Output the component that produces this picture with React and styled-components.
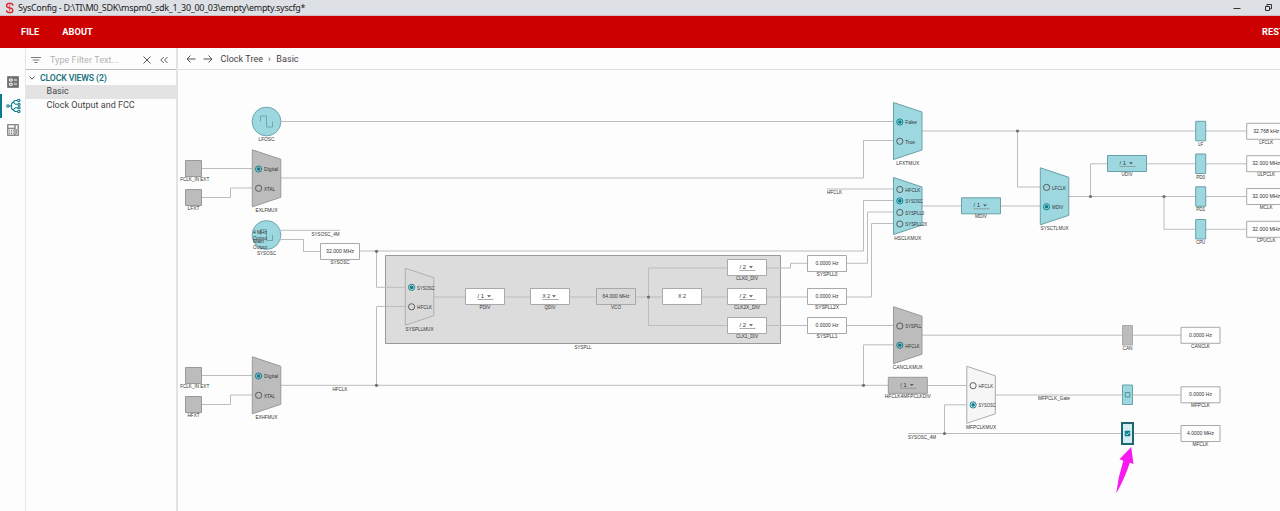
import React from 'react';
import styled, { createGlobalStyle } from 'styled-components';

const GlobalStyle = createGlobalStyle`
  * { box-sizing: border-box; }
  body { margin: 0; background: #fdfdfd; font-family: Roboto, "Liberation Sans", sans-serif; overflow: hidden; }
`;

const C = {
  teal: '#9dd7df', tealLine: '#6aa0a8', accent: '#0b7c8c', dark: '#1f6673',
  grey: '#bcbcbc', greyLine: '#999', light: '#f6f6f6', white: '#fefefe',
  wire: '#bdbdbd', text: '#333',
};

const Window = styled.div`
  width: 1280px;
  height: 511px;
  display: flex;
  flex-direction: column;
  overflow: hidden;
`;
const TitleBar = styled.header`
  height: 16px;
  flex: none;
  display: flex;
  align-items: center;
  padding-left: 5px;
  background: #dde1e5;
  border-bottom: 1px solid #d2bcc0;
`;
const Title = styled.span`
  flex: 1;
  margin-left: 4px;
  font: 9px/15px "Noto Sans", sans-serif;
  letter-spacing: -0.3px;
  color: #222;
  white-space: pre;
`;
const WindowButtons = styled.div`
  display: flex;
  align-items: center;
  gap: 23px;
  padding-right: 7px;
`;
const MenuBar = styled.nav`
  height: 32px;
  flex: none;
  display: flex;
  align-items: center;
  gap: 23px;
  padding: 0 0 1px 21px;
  background: #c00;
  overflow: hidden;
`;
const MenuItem = styled.span`
  flex: none;
  margin-left: ${p => (p.$end ? 'auto' : 0)};
  margin-right: ${p => (p.$end ? '-22px' : 0)};
  color: #fff;
  font-size: 9.2px;
  font-weight: 700;
  letter-spacing: 0.1px;
`;
const Body = styled.div`
  flex: 1;
  display: flex;
  min-height: 0;
`;
const Rail = styled.aside`
  width: 26px;
  flex: none;
  padding-top: 22px;
  border-right: 1px solid #e6e6e6;
`;
const RailItem = styled.div`
  height: 24px;
  display: flex;
  align-items: center;
  padding-left: 4px;
  border-left: 2px solid ${p => (p.$active ? C.accent : 'transparent')};
`;
const Sidebar = styled.section`
  width: 152px;
  flex: none;
  border-right: 2px solid #e3e3e3;
  color: #444;
  font-size: 9px;
`;
const FilterRow = styled.div`
  height: 22px;
  display: flex;
  align-items: center;
  padding: 2px 8px 0 5px;
  border-bottom: 1px solid #bdbdbd;
`;
const Placeholder = styled.span`
  flex: 1;
  margin-left: 9px;
  color: #b3b3b3;
  font-size: 9px;
  letter-spacing: 0.05px;
`;
const GroupRow = styled.div`
  height: 15px;
  display: flex;
  align-items: center;
  gap: 5px;
  padding-left: 3px;
  color: #1b7481;
  font-weight: 600;
  font-size: 8.7px;
  letter-spacing: -0.13px;
`;
const TreeItem = styled.div`
  height: 14px;
  padding-left: 20.5px;
  line-height: 13.5px;
  letter-spacing: 0.02px;
  background: ${p => (p.$selected ? '#e3e3e3' : 'transparent')};
`;
const Main = styled.main`
  flex: 1;
  min-width: 0;
  display: flex;
  flex-direction: column;
`;
const Breadcrumb = styled.div`
  height: 22px;
  flex: none;
  display: flex;
  align-items: center;
  padding-left: 8px;
  color: #444;
  font-size: 9px;
  letter-spacing: 0.05px;
  border-bottom: 1px solid #dedede;
`;
const Crumb = styled.span`
  margin-left: ${p => p.$gap}px;
`;
const Canvas = styled.svg`
  display: block;
  flex: none;
`;
const Wire = styled.path`
  fill: none;
  stroke: ${C.wire};
  stroke-width: 1;
`;
const Caption = styled.text`
  font-family: "Liberation Sans", sans-serif;
  font-size: 5.2px;
  fill: ${C.text};
`;
const Shape = styled.path`
  fill: ${p => p.$fill};
  stroke: ${p => p.$stroke};
  stroke-width: ${p => p.$w || 1};
`;
const Stroke = styled.svg`
  flex: none;
  margin-left: ${p => p.$gap || 0}px;
  fill: none;
  stroke: ${p => p.$color || '#666'};
  stroke-width: ${p => p.$w || 1};
`;

const Label = ({ x, y, w, anchor = 'middle', children }) => (
  <Caption x={x} y={y - 0.7} textAnchor={anchor} textLength={w} lengthAdjust="spacingAndGlyphs">{children}</Caption>
);

const Block = ({ x, y, w, h, fill = C.white, stroke = '#a9a9a9', sw }) => (
  <Shape d={`M${x} ${y}h${w}v${h}h${-w}z`} $fill={fill} $stroke={stroke} $w={sw} />
);

const Value = ({ x, y, value, name, vw = 23, nw, fill }) => (
  <g>
    <Block x={x} y={y} w={39} h={16} fill={fill} />
    <Label x={x + 19.5} y={y + 10.2} w={vw}>{value}</Label>
    {name && <Label x={x + 19.5} y={y + 21.3} w={nw}>{name}</Label>}
  </g>
);

const Divider = ({ x, y, value = '/ 1', name, nw, fill = C.white, stroke = '#a9a9a9' }) => (
  <g>
    <Block x={x} y={y} w={39} h={16} fill={fill} stroke={stroke} />
    <Label x={x + 12} y={y + 10.3} w={value[0] === 'X' ? 7.5 : 6.5} anchor="start">{value}</Label>
    <path d={`M${x + 21.5} ${y + 6.7}h4l-2 2z`} fill="#555" />
    <path d={`M${x + 12} ${y + 11}h16`} stroke="#888" strokeWidth="0.7" />
    <Label x={x + 19.5} y={y + 21.3} w={nw}>{name}</Label>
  </g>
);

const Radio = ({ x, y, on }) => (
  <g>
    <circle cx={x} cy={y} r="3.1" fill="none" stroke={on ? C.accent : '#555'} strokeWidth="0.95" />
    {on && <circle cx={x} cy={y} r="1.8" fill={C.accent} />}
  </g>
);

const Mux = ({ x, y, name, nw, options, fill = C.grey, stroke = C.greyLine }) => (
  <g>
    <Shape d={`M${x} ${y}l28.5 9.5v38l-28.5 9.5z`} $fill={fill} $stroke={stroke} />
    {options.map(([text, dy, w, on]) => (
      <g key={text}>
        <Radio x={x + 6.3} y={y + dy} on={on} />
        <Label x={x + 11.8} y={y + dy + 3} w={w} anchor="start">{text}</Label>
      </g>
    ))}
    <Label x={x + 14.3} y={y + 63.2} w={nw}>{name}</Label>
  </g>
);

const Gate = ({ x, y, name, fill = C.teal, stroke = C.tealLine, nw }) => (
  <g>
    <Block x={x} y={y} w={10} h={19.5} fill={fill} stroke={stroke} />
    {name && <Label x={x + 5} y={y + 25.3} w={nw}>{name}</Label>}
  </g>
);

const Oscillator = ({ x, y, name }) => (
  <g>
    <circle cx={x} cy={y} r="14.4" fill={C.teal} stroke={C.tealLine} strokeWidth="0.9" />
    <path d={`M${x - 6} ${y}v-5.5h6v11h6v-5.5`} fill="none" stroke="#6f9fa7" strokeWidth="0.9" />
    <Label x={x} y={y + 20.3} w={name.length > 5 ? 19 : 16}>{name}</Label>
  </g>
);

const Pin = ({ y, name, nw, dx = 0 }) => (
  <g>
    <Block x={185.5} y={y} w={16} h={16} fill={C.grey} stroke={C.greyLine} />
    <Label x={193.5 + dx} y={y + 21.3} w={nw}>{name}</Label>
  </g>
);

const WIRES = [
  'M281 121.5H893', 'M202 168.5H252', 'M202 197.5H230.5V188H252', 'M281 178H863.5V140.5H893',
  'M281 230.3H340', 'M281 239.5H303.5V251.5H320', 'M359 251H863.5V200.5H893',
  'M376.5 251V287.3H405', 'M376.5 385V306.5H405', 'M202 375.5H252', 'M202 404.5H230.5V395H252',
  'M281 385.3H888', 'M827 189H893',
  'M847 263.3H867.5V212H893', 'M847 297H871.5V223.5H893', 'M847 325.5H893',
  'M922 131H1247', 'M1017.5 131V187H1040', 'M922 206H1040',
  'M1069 196.5H1247', 'M1090.5 196.5V163.8H1247', 'M1164 196.5V229.3H1247',
  'M922 335.2H1181', 'M863.5 385V344.8H893', 'M927 385.5H966',
  'M995 395H1181', 'M908 433.5H1181', 'M944.5 433.5V404.8H966',
];
const PLL_WIRES = [
  'M434 297H728', 'M648.5 297V268H728', 'M648.5 297V325.5H728',
  'M767 268H790.5V263.3H808', 'M767 297H808', 'M767 325.5H808',
];
const JUNCTIONS = [[376.5, 251.3], [376.5, 385.3], [863.5, 385.3], [1017.5, 131], [1090.5, 196.5], [1164, 196.5], [944.5, 433.5]];

const ClockTree = () => (
  <Canvas width="1102" height="441" viewBox="178 70 1102 441">
    {WIRES.map(d => <Wire key={d} d={d} />)}

    <Oscillator x={266.5} y={121.5} name="LFOSC" />
    <Pin y={160.5} name="FCLK_IN EXT" nw={29} dx={1.2} />
    <Pin y={189.5} name="LFXT" nw={12} />
    <Mux x={252.3} y={149.8} name="EXLFMUX" nw={22} options={[['Digital', 19.2, 14, true], ['XTAL', 38.5, 11]]} />
    <Oscillator x={266.5} y={235} name="SYSOSC" />
    <Label x={253} y={234.3} w={14} anchor="start">4 MHz</Label>
    <Label x={253} y={240.2} w={14} anchor="start">Output</Label>
    <Label x={253} y={243.7} w={11} anchor="start">Main</Label>
    <Label x={253} y={249.7} w={14} anchor="start">Output</Label>
    <Label x={325.5} y={236.2} w={28}>SYSOSC_4M</Label>
    <Value x={320.5} y={243.5} value="32.000 MHz" vw={28} name="SYSOSC" nw={19} />

    <Pin y={367.5} name="FCLK_IN EXT" nw={29} dx={1.2} />
    <Pin y={396.5} name="HFXT" nw={12} />
    <Mux x={252.3} y={356.8} name="EXHFMUX" nw={22} options={[['Digital', 19.2, 14, true], ['XTAL', 38.5, 11]]} />
    <Label x={340} y={391.6} w={15}>HFCLK</Label>

    <Block x={385.5} y={255.5} w={395} h={88} fill="#dcdcdc" stroke="#999" />
    <Wire d="M385 287.3H405M385 306.5H405" />
    {PLL_WIRES.map(d => <Wire key={d} d={d} />)}
    <Mux x={405.3} y={268.2} fill="#d9d9d9" stroke="#b0b0b0" name="SYSPLLMUX" nw={28} options={[['SYSOSC', 19.2, 17.5, true], ['HFCLK', 38.6, 15]]} />
    <Divider x={465.5} y={288.5} name="PDIV" nw={11} />
    <Divider x={530.5} y={288.5} name="QDIV" nw={11} value="X 2" />
    <Value x={596.5} y={288.5} value="64.000 MHz" vw={27} name="VCO" nw={10} fill="#d9d9d9" />
    <Value x={662.5} y={288.5} value="X 2" vw={8} />
    <Divider x={727.5} y={259.5} name="CLK0_DIV" nw={22} value="/ 2" />
    <Divider x={727.5} y={288.5} name="CLK2X_DIV" nw={26} value="/ 2" />
    <Divider x={727.5} y={317.5} name="CLK1_DIV" nw={22} value="/ 2" />
    <Label x={583} y={349.5} w={17}>SYSPLL</Label>

    <Value x={807.5} y={255.5} value="0.0000 Hz" name="SYSPLL0" nw={21} />
    <Value x={807.5} y={288.5} value="0.0000 Hz" name="SYSPLL2X" nw={24} />
    <Value x={807.5} y={317.5} value="0.0000 Hz" name="SYSPLL1" nw={21} />

    <Mux x={893.5} y={102.5} fill={C.teal} stroke={C.tealLine} name="LFXTMUX" nw={23} options={[['False', 19.5, 11.5, true], ['True', 38.8, 9.5]]} />
    <Label x={834.5} y={194.4} w={15}>HFCLK</Label>
    <Mux x={893.5} y={177.5} fill={C.teal} stroke={C.tealLine} name="HSCLKMUX" nw={27}
      options={[['HFCLK', 12, 15], ['SYSOSC', 23.4, 17.5, true], ['SYSPLL0', 35, 19], ['SYSPLL2X', 46.5, 22]]} />
    <Divider x={961.5} y={197.8} fill={C.teal} stroke={C.tealLine} name="MDIV" nw={12} />
    <Mux x={1040.3} y={167.8} fill={C.teal} stroke={C.tealLine} name="SYSCTLMUX" nw={28} options={[['LFCLK', 19.6, 14], ['MDIV', 39, 11, true]]} />
    <Divider x={1107.5} y={155.5} fill={C.teal} stroke={C.tealLine} name="UDIV" nw={11} />
    <Gate x={1195.7} y={121.3} name="LF" nw={5} />
    <Gate x={1195.7} y={154} name="PD0" nw={9} />
    <Gate x={1195.7} y={186.8} name="PD1" nw={9} />
    <Gate x={1195.7} y={219.5} name="CPU" nw={9} />
    <Value x={1246.7} y={123.3} value="32.768 kHz" vw={26} name="LFCLK" nw={14} />
    <Value x={1246.7} y={155.7} value="32.000 MHz" vw={28} name="ULPCLK" nw={18} />
    <Value x={1246.7} y={188.5} value="32.000 MHz" vw={28} name="MCLK" nw={13} />
    <Value x={1246.7} y={221.3} value="32.000 MHz" vw={28} name="CPUCLK" nw={19} />

    <Mux x={893.5} y={306.7} name="CANCLKMUX" nw={30} options={[['SYSPLL', 19.3, 16.5], ['HFCLK', 38.6, 14.5, true]]} />
    <Divider x={888.3} y={377.3} fill={C.grey} stroke={C.greyLine} name="HFCLK4MFPCLKDIV" nw={46} />
    <Mux x={966.8} y={366.3} fill={C.light} stroke="#aaa" name="MFPCLKMUX" nw={30} options={[['HFCLK', 19.4, 14.5], ['SYSOSC', 38.6, 17, true]]} />
    <Label x={922} y={439.3} w={28}>SYSOSC_4M</Label>
    <Label x={1054} y={400.9} w={32}>MFPCLK_Gate</Label>
    <Gate x={1122.5} y={325.5} name="CAN" nw={10} fill={C.grey} stroke="#aaa" />
    <Gate x={1122.5} y={385} />
    <Shape d="M1125.3 392.5h4.5v4.5h-4.5z" $fill="none" $stroke="#4b8993" $w={0.9} />
    <Block x={1122} y={423} w={11} h={21} fill="#d3eef2" stroke={C.dark} sw={2} />
    <Shape d="M1125 431h5v5h-5z" $fill={C.accent} $stroke={C.accent} $w={0.5} />
    <path d="M1125.8 433.5l1.3 1.3 2.4-2.5" fill="none" stroke="#fff" strokeWidth="0.8" />
    <Value x={1181} y={327.3} value="0.0000 Hz" name="CANCLK" nw={19} />
    <Value x={1181} y={386.8} value="0.0000 Hz" name="MFPCLK" nw={19} />
    <Value x={1181} y={425.5} value="4.0000 MHz" vw={27} name="MFCLK" nw={16} />
    {JUNCTIONS.concat([[648.5, 297]]).map(([x, y]) => (
      <circle key={`${x}-${y}`} cx={x} cy={y} r="1.6" fill="#707070" />
    ))}
    <path d="M1131.2 447L1133.500 464 1129.800 462.800Q1125 478 1116.200 493.500 1118 477 1123.300 460.700L1119.500 459.300z" fill="#f81af0" />
  </Canvas>
);

export default function App() {
  return (
    <Window>
      <GlobalStyle />
      <TitleBar>
        <Stroke width="9" height="12" viewBox="0 0 9 12" $color="#d9272e" $w={1.4}>
          <path d="M7.700 3.700V2.500L6.500 1.500h-3.500L1.700 2.600v2L3 5.500l3.500 1 1.200 1v2L6.500 10.500h-3.500L1.700 9.500V8.300" />
          <path d="M4.700 3.200v1.600M4.700 7.200v1.700" strokeWidth="0.900" />
        </Stroke>
        <Title>{'SysConfig - D:\\TI\\M0_SDK\\mspm0_sdk_1_30_00_03\\empty\\empty.syscfg*'}</Title>
        <WindowButtons>
          <Stroke width="8" height="8" $color="#333"><path d="M.5 4.500h7" /></Stroke>
          <Stroke width="9" height="9" $color="#333">
            <path d="M1.500 3.500h4v4h-4zM3 3.200V1.500h4.500v4.300H6" />
          </Stroke>
        </WindowButtons>
      </TitleBar>
      <MenuBar>
        <MenuItem>FILE</MenuItem>
        <MenuItem>ABOUT</MenuItem>
        <MenuItem $end>RESTART</MenuItem>
      </MenuBar>
      <Body>
        <Rail>
          <RailItem>
            <Stroke width="14" height="14" $color="#666" $w={1.2}>
              <path d="M1.800 1.800h10.400v10.400H1.800z" fill="#777" />
              <path d="M3.500 4h2.700v2H3.500zM3.500 8.300h2.700v2H3.500zM8 5h3M8 9h3" stroke="#fff" strokeWidth="0.900" />
            </Stroke>
          </RailItem>
          <RailItem $active>
            <Stroke width="16" height="16" $color={C.accent} $w={1.1}>
              <circle cx="1.900" cy="8" r="1.200" />
              <path d="M3.100 8H5.500M5.500 5.500v5M5.500 5.500L9 2.500h2.500M5.500 10.500L9 13.500h2.500M7.300 4.300l2.200 2h2.200M7.300 11.700l2.200-2h2.200" />
              <circle cx="12.800" cy="2.500" r="1.200" /><circle cx="13" cy="6.300" r="1.100" />
              <circle cx="13" cy="9.700" r="1.100" /><circle cx="12.800" cy="13.500" r="1.200" />
            </Stroke>
          </RailItem>
          <RailItem>
            <Stroke width="14" height="14" $color="#666" $w={1.1}>
              <path d="M1.800 1.800h10.400v10.400H1.800zM1.800 5.200h7.200M9 1.800v10.400" />
              <path d="M3.200 7.200h5M3.200 9h5M3.200 10.800h5" strokeDasharray="1 0.800" />
              <path d="M10.600 6v5" strokeWidth="0.700" />
            </Stroke>
          </RailItem>
        </Rail>
        <Sidebar>
          <FilterRow>
            <Stroke width="10" height="8" $color="#777"><path d="M0 1.500h10M1.700 4h6.600M3.500 6.500h3" /></Stroke>
            <Placeholder>Type Filter Text...</Placeholder>
            <Stroke width="8" height="8" $color="#555"><path d="M.5.5l7 7M7.500.5l-7 7" /></Stroke>
            <Stroke width="8" height="8" $color="#555" $gap={9.5}><path d="M3.800 1L.8 4l3 3M7.500 1l-3 3 3 3" /></Stroke>
          </FilterRow>
          <GroupRow>
            <Stroke width="6" height="6" $color="#555"><path d="M.5 1.500l2.500 2.700 2.500-2.700" /></Stroke>
            CLOCK VIEWS (2)
          </GroupRow>
          <TreeItem $selected>Basic</TreeItem>
          <TreeItem>Clock Output and FCC</TreeItem>
        </Sidebar>
        <Main>
          <Breadcrumb>
            <Stroke width="10" height="8" $color="#555"><path d="M9.500 4H1M4.500.5L1 4l3.500 3.500" /></Stroke>
            <Stroke width="10" height="8" $color="#555" $gap={7}><path d="M.5 4H9M5.500.5L9 4 5.500 7.500" /></Stroke>
            <Crumb $gap={7.5}>Clock Tree</Crumb>
            <Crumb $gap={5}>›</Crumb>
            <Crumb $gap={5.500}>Basic</Crumb>
          </Breadcrumb>
          <ClockTree />
        </Main>
      </Body>
    </Window>
  );
}
